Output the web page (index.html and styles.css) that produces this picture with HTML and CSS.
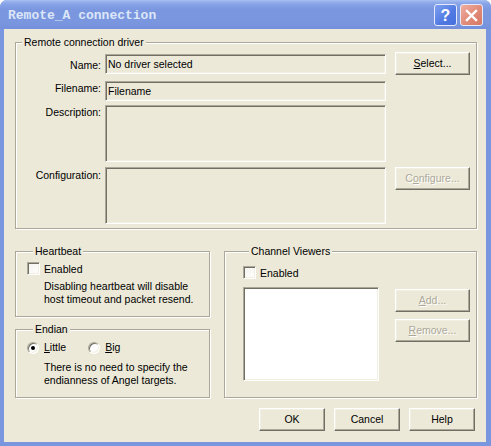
FILE: index.html
```html
<!DOCTYPE html>
<html>
<head>
<meta charset="utf-8">
<title>Remote_A connection</title>
<link rel="stylesheet" href="styles.css">
</head>
<body>
<div class="window">
  <div class="titlebar">
    <span class="title">Remote_A connection</span>
    <div class="title-buttons">
      <span class="tbtn tbtn-help">?</span>
      <span class="tbtn tbtn-close">
        <svg width="13" height="13" viewBox="0 0 13 13"><path d="M2 2 L11 11 M11 2 L2 11" stroke="#fff" stroke-width="2.4" stroke-linecap="square"/></svg>
      </span>
    </div>
  </div>
  <div class="client">
    <fieldset class="group driver">
      <legend>Remote connection driver</legend>
      <div class="driver-grid">
        <span class="lbl lbl-name">Name:</span>
        <div class="edit edit-name">No driver selected</div>
        <button class="btn btn-select"><u>S</u>elect...</button>
        <span class="lbl lbl-file">Filename:</span>
        <div class="edit edit-file">Filename</div>
        <span class="lbl lbl-desc">Description:</span>
        <div class="edit edit-desc"></div>
        <span class="lbl lbl-conf">Configuration:</span>
        <div class="edit edit-conf"></div>
        <button class="btn btn-conf" disabled>C<u>o</u>nfigure...</button>
      </div>
    </fieldset>

    <div class="middle">
      <div class="left-col">
        <fieldset class="group heartbeat">
          <legend>Heartbeat</legend>
          <div class="check-row"><span class="checkbox"></span><span>Enabled</span></div>
          <p class="note">Disabling heartbeat will disable<br>host timeout and packet resend.</p>
        </fieldset>
        <fieldset class="group endian">
          <legend>Endian</legend>
          <div class="radio-row">
            <span class="radio-item"><span class="radio checked"></span><span><u>L</u>ittle</span></span>
            <span class="radio-item"><span class="radio"></span><span><u>B</u>ig</span></span>
          </div>
          <p class="note">There is no need to specify the<br>endianness of Angel targets.</p>
        </fieldset>
      </div>
      <fieldset class="group channels">
        <legend>Channel Viewers</legend>
        <div class="check-row"><span class="checkbox"></span><span>Enabled</span></div>
        <div class="viewer-row">
          <div class="listbox"></div>
          <div class="viewer-buttons">
            <button class="btn" disabled><u>A</u>dd...</button>
            <button class="btn" disabled><u>R</u>emove...</button>
          </div>
        </div>
      </fieldset>
    </div>

    <div class="footer">
      <button class="btn btn-small">OK</button>
      <button class="btn btn-small">Cancel</button>
      <button class="btn btn-small">Help</button>
    </div>
  </div>
</div>
</body>
</html>
```

FILE: styles.css
```css
html, body {
  margin: 0;
  padding: 0;
}
body {
  width: 491px;
  height: 446px;
  overflow: hidden;
  background: #ffffff;
  font-family: "Liberation Sans", Arial, sans-serif;
  font-size: 10.5px;
  line-height: 13px;
  color: #000;
}
.window {
  width: 491px;
  height: 446px;
  box-sizing: border-box;
  background: #7A96DF;
  border-radius: 7px 7px 0 0;
  display: flex;
  flex-direction: column;
  overflow: hidden;
}
.titlebar {
  height: 29px;
  flex: none;
  display: flex;
  align-items: center;
  padding-left: 8px;
  background: linear-gradient(#A9C1F2 0, #94AEEC 2px, #84A0E6 5px, #7A96DF 10px, #7A96DF 22px, #7490DC 29px);
}
.title {
  font-family: "Liberation Mono", "Courier New", monospace;
  font-weight: bold;
  font-size: 13px;
  color: #DCE6F8;
  padding-top: 1px;
}
.title-buttons {
  margin-left: auto;
  margin-right: 8px;
  display: flex;
  gap: 3px;
  padding-top: 1px;
}
.tbtn {
  width: 23px;
  height: 22px;
  box-sizing: border-box;
  border: 1px solid #E4EAF9;
  border-radius: 3px;
  display: flex;
  align-items: center;
  justify-content: center;
}
.tbtn-help {
  background: linear-gradient(135deg, #7FA0F0, #4F78E2 60%, #4670DC);
  color: #fff;
  font-family: "Liberation Sans", Arial, sans-serif;
  font-weight: bold;
  font-size: 16px;
}
.tbtn-close {
  background: linear-gradient(135deg, #F0AEA0, #E08A78 55%, #D67864);
}
.client {
  flex: 1;
  margin: 0 5px 4px 4px;
  background: #ECE9D8;
  padding: 7px 9px 0 11px;
  display: flex;
  flex-direction: column;
}

/* group boxes */
.group {
  margin: 0;
  padding: 0;
  min-width: 0;
  border: 1px solid #ACA899;
  box-shadow: 1px 1px 0 #fff, inset 1px 1px 0 #fff;
}
.group legend {
  margin-left: 6px;
  padding: 0 2px;
  line-height: 13px;
  background: #ECE9D8;
}

/* buttons */
.btn {
  box-sizing: border-box;
  width: 75px;
  height: 23px;
  padding: 0;
  margin: 0;
  background: #ECE9D8;
  border: 1px solid;
  border-color: #fff #716F64 #716F64 #fff;
  box-shadow: inset -1px -1px 0 #ACA899, inset 1px 1px 0 #F1EFE2;
  border-radius: 0;
  font-family: inherit;
  font-size: 10.5px;
  line-height: 13px;
  color: #000;
}
.btn:disabled {
  color: #ACA899;
  text-shadow: 1px 1px 0 #fff;
}
.btn u { text-decoration-thickness: 1px; text-underline-offset: 1px; }

/* driver group */
.driver {
  padding: 3px 0 4px 0;
}
.driver-grid {
  display: grid;
  grid-template-columns: 89px 290px 75px;
  grid-template-rows: 23px 26px 61px 62px;
}
.lbl {
  grid-column: 1;
  text-align: right;
  padding-right: 4px;
  align-self: start;
}
.lbl-name { grid-row: 1; padding-top: 7px; }
.lbl-file { grid-row: 2; padding-top: 7px; }
.lbl-desc { grid-row: 3; padding-top: 5px; }
.lbl-conf { grid-row: 4; padding-top: 7px; }

.edit {
  grid-column: 2;
  box-sizing: border-box;
  width: 281px;
  border: 1px solid;
  border-color: #ACA899 #fff #fff #ACA899;
  box-shadow: inset 1px 1px 0 #716F64, inset -1px -1px 0 #F1EFE2;
  background: #ECE9D8;
  padding: 3px 2px 0 2px;
  white-space: nowrap;
}
.edit-name { grid-row: 1; height: 20px; margin-top: 2px; align-self: start; }
.edit-file { grid-row: 2; height: 20px; align-self: end; }
.edit-desc { grid-row: 3; height: 57px; align-self: end; }
.edit-conf { grid-row: 4; height: 57px; align-self: end; }
.driver-grid .btn-select { grid-column: 3; grid-row: 1; }
.driver-grid .btn-conf { grid-column: 3; grid-row: 4; margin-top: 5px; align-self: start; }

/* middle */
.middle {
  margin-top: 16px;
  display: grid;
  grid-template-columns: 195px 1fr;
  column-gap: 14px;
}
.left-col {
  display: flex;
  flex-direction: column;
  gap: 6px;
}
.heartbeat {
  padding: 4px 0 10px 11px;
}
.endian {
  padding: 5px 0 10px 11px;
}
.check-row {
  display: flex;
  align-items: center;
  gap: 4px;
  height: 13px;
}
.check-row span:last-child { padding-top: 1px; }
.checkbox {
  width: 13px;
  height: 13px;
  box-sizing: border-box;
  border: 1px solid;
  border-color: #ACA899 #fff #fff #ACA899;
  box-shadow: inset 1px 1px 0 #716F64, inset -1px -1px 0 #F1EFE2;
  background: linear-gradient(135deg, #F4F3EE, #fff);
  flex: none;
}
.note {
  margin: 4px 0 0 17px;
  line-height: 13px;
}
.heartbeat .note { margin-top: 5px; }
.endian .note { margin-top: 7px; }
.radio-row {
  display: flex;
  height: 13px;
  align-items: center;
}
.radio-item {
  display: flex;
  align-items: center;
  gap: 5px;
}
.radio-item + .radio-item { margin-left: 22px; }
.radio {
  width: 12px;
  height: 12px;
  box-sizing: border-box;
  border-radius: 50%;
  border: 1px solid;
  border-color: #ACA899 #fff #fff #ACA899;
  box-shadow: inset 1px 1px 0 #716F64, inset -1px -1px 0 #F1EFE2;
  background: #fff;
  position: relative;
  flex: none;
}
.radio.checked::after {
  content: "";
  position: absolute;
  left: 3px;
  top: 3px;
  width: 4px;
  height: 4px;
  border-radius: 50%;
  background: #000;
}

/* channel viewers */
.channels {
  padding: 8px 0 0 18px;
}
.viewer-row {
  margin-top: 8px;
  display: flex;
  gap: 16px;
}
.listbox {
  width: 136px;
  height: 94px;
  box-sizing: border-box;
  border: 1px solid;
  border-color: #ACA899 #fff #fff #ACA899;
  box-shadow: inset 1px 1px 0 #716F64, inset -1px -1px 0 #F1EFE2;
  background: #fff;
}
.viewer-buttons {
  display: flex;
  flex-direction: column;
  gap: 7px;
  padding-top: 2px;
}

/* footer */
.footer {
  margin-top: 10px;
  margin-right: 2px;
  display: flex;
  justify-content: flex-end;
  gap: 9px;
}
.btn-small { width: 66px; }
```
